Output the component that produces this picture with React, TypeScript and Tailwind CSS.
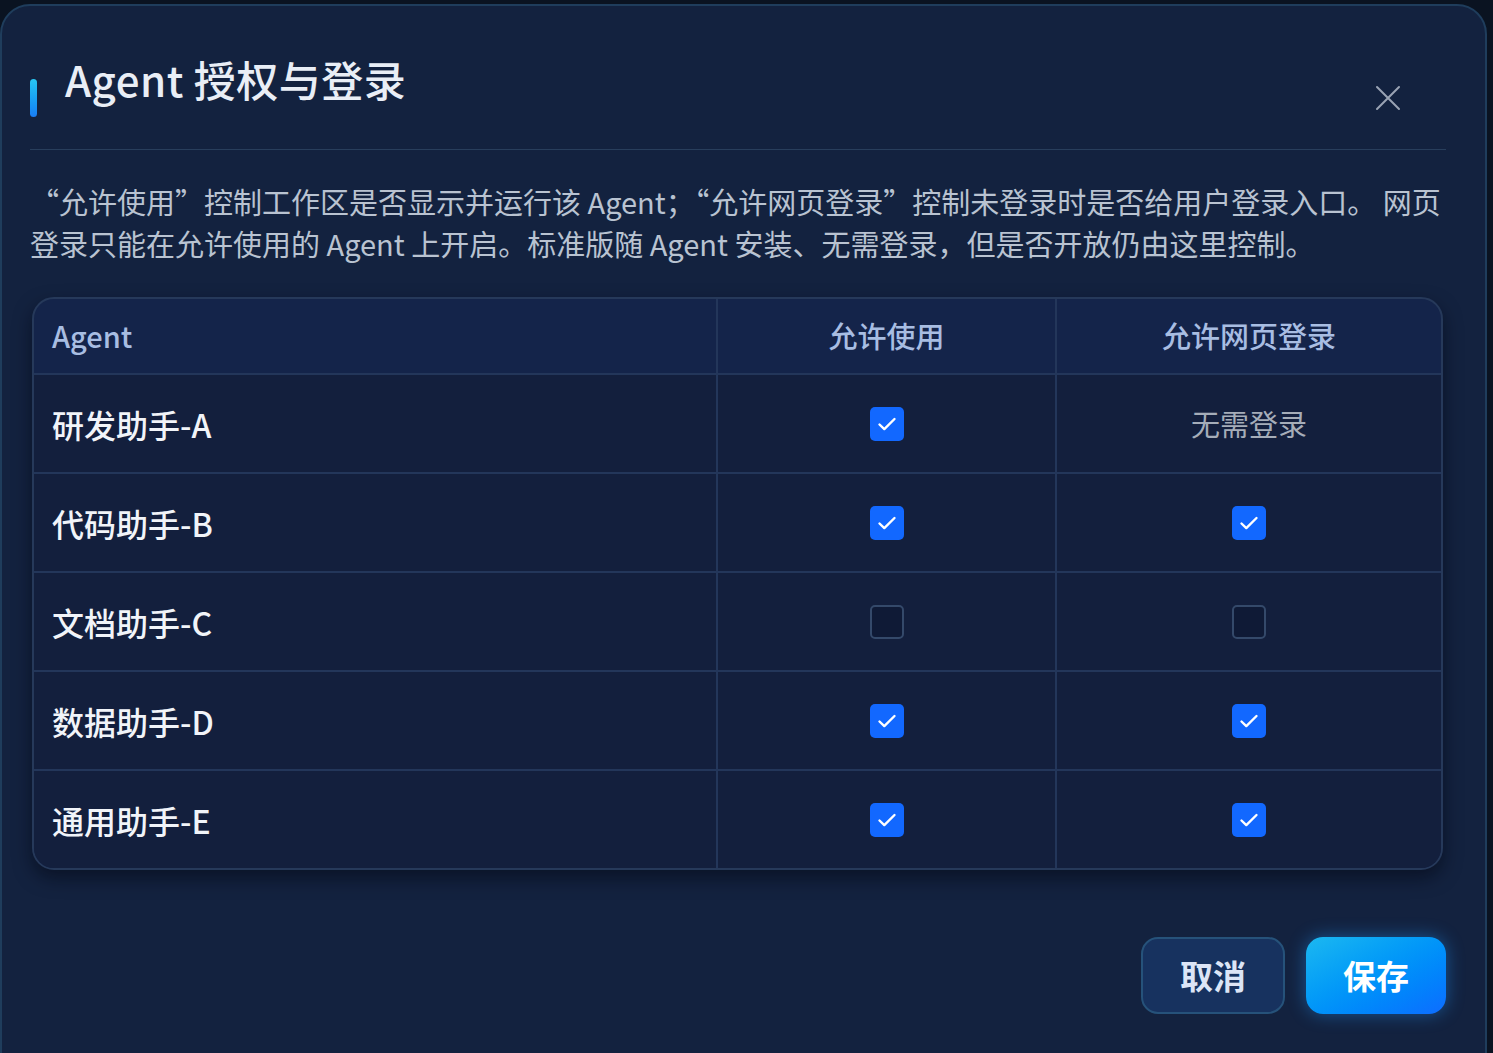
import { useState } from 'react';

interface AgentRow {
  id: string;
  name: string;
  allowUse: boolean;
  allowWebLogin: boolean | null;
}

const initialRows: AgentRow[] = [
  { id: 'a', name: '研发助手-A', allowUse: true, allowWebLogin: null },
  { id: 'b', name: '代码助手-B', allowUse: true, allowWebLogin: true },
  { id: 'c', name: '文档助手-C', allowUse: false, allowWebLogin: false },
  { id: 'd', name: '数据助手-D', allowUse: true, allowWebLogin: true },
  { id: 'e', name: '通用助手-E', allowUse: true, allowWebLogin: true },
];

function Checkbox({
  checked,
  onChange,
}: {
  checked: boolean;
  onChange: () => void;
}) {
  return (
    <button
      type="button"
      onClick={onChange}
      className={
        checked
          ? 'w-[34px] h-[34px] rounded-[5px] bg-[#1268ff] flex items-center justify-center'
          : 'w-[34px] h-[34px] rounded-[5px] bg-[#0f1a36] border-2 border-[#34496a]'
      }
    >
      {checked && (
        <svg width="24" height="24" viewBox="0 0 24 24" fill="none">
          <path
            d="M4.5 12.5l4.8 4.6L19.5 7"
            stroke="#ffffff"
            strokeWidth="2.4"
            strokeLinecap="round"
            strokeLinejoin="round"
          />
        </svg>
      )}
    </button>
  );
}

function App() {
  const [rows, setRows] = useState(initialRows);

  function toggle(id: string, key: 'allowUse' | 'allowWebLogin') {
    setRows((prev) =>
      prev.map((r) => (r.id === id ? { ...r, [key]: !r[key] } : r)),
    );
  }

  return (
    <div
      className="w-[1493px] h-[1053px] overflow-hidden bg-[#0a1321] pt-[4px]"
      style={{ fontFamily: '"Noto Sans CJK SC", "Noto Sans", sans-serif' }}
    >
      <div className="w-[1487px] h-[1080px] rounded-[30px] border-2 border-[#1f3d5c] bg-[#13223f] px-[28px] flex flex-col">
        {/* header */}
        <div className="flex items-start justify-between h-[144px] mr-[11px] border-b border-[#283e5c]">
          <div className="flex items-start">
            <span className="mt-[73px] w-[7px] h-[38px] rounded-full bg-gradient-to-b from-[#29c6f2] to-[#1a7df5]" />
            <h2 className="ml-[28px] mt-[43px] text-[42px] leading-[60px] font-medium text-[#e9eef6] tracking-[0.5px]">
              Agent 授权与登录
            </h2>
          </div>
          <button type="button" className="mt-[78px] mr-[44px] text-[#9aa4b4]">
            <svg width="28" height="28" viewBox="0 0 28 28" fill="none">
              <path
                d="M3 3l22 22M25 3L3 25"
                stroke="currentColor"
                strokeWidth="2"
                strokeLinecap="round"
              />
            </svg>
          </button>
        </div>

        {/* description */}
        <div className="mt-[30px] text-[29px] leading-[42px] text-[#b9c3d1]">
          <p className="whitespace-nowrap">
            “允许使用”控制工作区是否显示并运行该 Agent；“允许网页登录”控制未登录时是否给用户登录入口。 网页
          </p>
          <p className="whitespace-nowrap">
            登录只能在允许使用的 Agent 上开启。标准版随 Agent 安装、无需登录，但是否开放仍由这里控制。
          </p>
        </div>

        {/* table */}
        <div className="mt-[33px] ml-[2px] w-[1411px] rounded-[22px] border-2 border-[#26395a] bg-[#14244a] overflow-hidden shadow-[0_8px_18px_rgba(3,8,20,0.55)]">
          <div className="grid grid-cols-[684px_339px_1fr] h-[76px] border-b-2 border-[#23365a] text-[29px] font-medium text-[#a8bde2]">
            <div className="flex items-center pl-[18px] border-r-2 border-[#23365a]">
              Agent
            </div>
            <div className="flex items-center justify-center border-r-2 border-[#23365a]">
              允许使用
            </div>
            <div className="flex items-center justify-center">允许网页登录</div>
          </div>
          {rows.map((r, i) => (
            <div
              key={r.id}
              className={
                i < rows.length - 1
                  ? 'grid grid-cols-[684px_339px_1fr] h-[99px] border-b-2 border-[#23365a] bg-[#131f3d]'
                  : 'grid grid-cols-[684px_339px_1fr] h-[97px] bg-[#131f3d]'
              }
            >
              <div className="flex items-center pl-[18px] border-r-2 border-[#23365a] text-[32px] font-medium text-[#f1f4f9]">
                {r.name}
              </div>
              <div className="flex items-center justify-center border-r-2 border-[#23365a]">
                <Checkbox
                  checked={r.allowUse}
                  onChange={() => toggle(r.id, 'allowUse')}
                />
              </div>
              <div className="flex items-center justify-center">
                {r.allowWebLogin === null ? (
                  <span className="text-[29px] text-[#a5adb9]">无需登录</span>
                ) : (
                  <Checkbox
                    checked={r.allowWebLogin}
                    onChange={() => toggle(r.id, 'allowWebLogin')}
                  />
                )}
              </div>
            </div>
          ))}
        </div>

        {/* footer */}
        <div className="mt-[67px] flex justify-end gap-[21px] pr-[11px]">
          <button
            type="button"
            className="w-[144px] h-[77px] rounded-[17px] border-2 border-[#26527a] bg-[#17325f] text-[33px] font-bold text-[#dce5f6]"
          >
            取消
          </button>
          <button
            type="button"
            className="w-[140px] h-[77px] rounded-[17px] bg-gradient-to-br from-[#1cb8f0] to-[#0f6cff] text-[33px] font-bold text-white shadow-[0_0_18px_rgba(30,150,255,0.45)]"
          >
            保存
          </button>
        </div>
      </div>
    </div>
  );
}

export default App;
